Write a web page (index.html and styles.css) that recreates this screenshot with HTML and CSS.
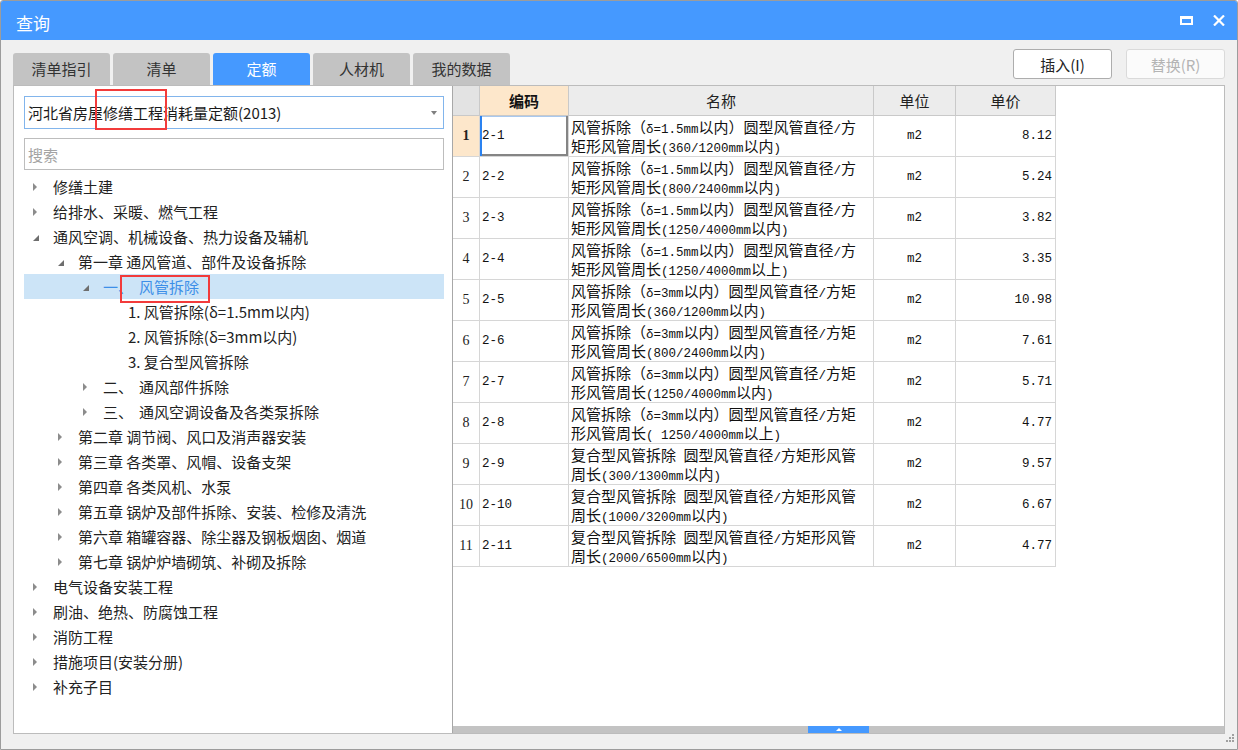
FILE: index.html
```html
<!DOCTYPE html>
<html lang="zh-CN">
<head>
<meta charset="utf-8">
<title>查询</title>
<link rel="stylesheet" href="styles.css">
</head>
<body>
<div class="window">
  <div class="titlebar">
    <span class="title">查询</span>
    <div class="win-btns">
      <svg class="ic" width="13" height="9" viewBox="0 0 13 9"><path d="M0 0h13v9H0z M2 3h9v4H2z" fill="#fff" fill-rule="evenodd"/></svg>
      <svg class="ic" width="12" height="11" viewBox="0 0 12 11"><path d="M1 0.5L11 10.5M11 0.5L1 10.5" stroke="#fff" stroke-width="2.2"/></svg>
    </div>
  </div>
  <div class="content">
    <div class="toolbar">
      <div class="tabs">
        <div class="tab">清单指引</div>
        <div class="tab">清单</div>
        <div class="tab active">定额</div>
        <div class="tab">人材机</div>
        <div class="tab">我的数据</div>
      </div>
      <div class="actions">
        <button class="btn">插入(I)</button>
        <button class="btn disabled">替换(R)</button>
      </div>
    </div>
    <div class="main">
      <div class="left">
        <div class="combo">
          <span class="combo-text">河北省房屋修缮工程消耗量定额(2013)</span>
          <span class="combo-arrow"></span>
          <span class="mark mark-combo"></span>
        </div>
        <div class="search">搜索</div>
        <ul class="tree">
          <li class="node l0"><i class="tw c"></i><span>修缮土建</span></li>
          <li class="node l0"><i class="tw c"></i><span>给排水、采暖、燃气工程</span></li>
          <li class="node l0"><i class="tw o"></i><span>通风空调、机械设备、热力设备及辅机</span></li>
          <li class="node l1"><i class="tw o"></i><span>第一章 通风管道、部件及设备拆除</span></li>
          <li class="node l2 sel"><i class="tw o"></i><span>一、</span><span class="sub">风管拆除</span><span class="mark mark-node"></span></li>
          <li class="node l3"><i class="tw"></i><span>1. 风管拆除(δ=1.5mm以内)</span></li>
          <li class="node l3"><i class="tw"></i><span>2. 风管拆除(δ=3mm以内)</span></li>
          <li class="node l3"><i class="tw"></i><span>3. 复合型风管拆除</span></li>
          <li class="node l2"><i class="tw c"></i><span>二、</span><span class="sub">通风部件拆除</span></li>
          <li class="node l2"><i class="tw c"></i><span>三、</span><span class="sub">通风空调设备及各类泵拆除</span></li>
          <li class="node l1"><i class="tw c"></i><span>第二章 调节阀、风口及消声器安装</span></li>
          <li class="node l1"><i class="tw c"></i><span>第三章 各类罩、风帽、设备支架</span></li>
          <li class="node l1"><i class="tw c"></i><span>第四章 各类风机、水泵</span></li>
          <li class="node l1"><i class="tw c"></i><span>第五章 锅炉及部件拆除、安装、检修及清洗</span></li>
          <li class="node l1"><i class="tw c"></i><span>第六章 箱罐容器、除尘器及钢板烟囱、烟道</span></li>
          <li class="node l1"><i class="tw c"></i><span>第七章 锅炉炉墙砌筑、补砌及拆除</span></li>
          <li class="node l0"><i class="tw c"></i><span>电气设备安装工程</span></li>
          <li class="node l0"><i class="tw c"></i><span>刷油、绝热、防腐蚀工程</span></li>
          <li class="node l0"><i class="tw c"></i><span>消防工程</span></li>
          <li class="node l0"><i class="tw c"></i><span>措施项目(安装分册)</span></li>
          <li class="node l0"><i class="tw c"></i><span>补充子目</span></li>
        </ul>
      </div>
      <div class="right">
        <div class="grid-area">
          <table class="grid">
            <colgroup><col class="c-rn"><col class="c-code"><col class="c-name"><col class="c-unit"><col class="c-price"></colgroup>
            <thead>
              <tr><th class="corner"></th><th class="sorted">编码</th><th>名称</th><th>单位</th><th>单价</th></tr>
            </thead>
            <tbody>
              <tr><td class="rn cur">1</td><td class="code focus">2-1</td><td class="name">风管拆除（<span class="m">δ=1.5mm</span>以内）圆型风管直径<span class="m">/</span>方<br>矩形风管周长<span class="m">(360/1200mm</span>以内<span class="m">)</span></td><td class="unit">m2</td><td class="price">8.12</td></tr>
              <tr><td class="rn">2</td><td class="code">2-2</td><td class="name">风管拆除（<span class="m">δ=1.5mm</span>以内）圆型风管直径<span class="m">/</span>方<br>矩形风管周长<span class="m">(800/2400mm</span>以内<span class="m">)</span></td><td class="unit">m2</td><td class="price">5.24</td></tr>
              <tr><td class="rn">3</td><td class="code">2-3</td><td class="name">风管拆除（<span class="m">δ=1.5mm</span>以内）圆型风管直径<span class="m">/</span>方<br>矩形风管周长<span class="m">(1250/4000mm</span>以内<span class="m">)</span></td><td class="unit">m2</td><td class="price">3.82</td></tr>
              <tr><td class="rn">4</td><td class="code">2-4</td><td class="name">风管拆除（<span class="m">δ=1.5mm</span>以内）圆型风管直径<span class="m">/</span>方<br>矩形风管周长<span class="m">(1250/4000mm</span>以上<span class="m">)</span></td><td class="unit">m2</td><td class="price">3.35</td></tr>
              <tr><td class="rn">5</td><td class="code">2-5</td><td class="name">风管拆除（<span class="m">δ=3mm</span>以内）圆型风管直径<span class="m">/</span>方矩<br>形风管周长<span class="m">(360/1200mm</span>以内<span class="m">)</span></td><td class="unit">m2</td><td class="price">10.98</td></tr>
              <tr><td class="rn">6</td><td class="code">2-6</td><td class="name">风管拆除（<span class="m">δ=3mm</span>以内）圆型风管直径<span class="m">/</span>方矩<br>形风管周长<span class="m">(800/2400mm</span>以内<span class="m">)</span></td><td class="unit">m2</td><td class="price">7.61</td></tr>
              <tr><td class="rn">7</td><td class="code">2-7</td><td class="name">风管拆除（<span class="m">δ=3mm</span>以内）圆型风管直径<span class="m">/</span>方矩<br>形风管周长<span class="m">(1250/4000mm</span>以内<span class="m">)</span></td><td class="unit">m2</td><td class="price">5.71</td></tr>
              <tr><td class="rn">8</td><td class="code">2-8</td><td class="name">风管拆除（<span class="m">δ=3mm</span>以内）圆型风管直径<span class="m">/</span>方矩<br>形风管周长<span class="m">( 1250/4000mm</span>以上<span class="m">)</span></td><td class="unit">m2</td><td class="price">4.77</td></tr>
              <tr><td class="rn">9</td><td class="code">2-9</td><td class="name">复合型风管拆除<span class="m"> </span>圆型风管直径<span class="m">/</span>方矩形风管<br>周长<span class="m">(300/1300mm</span>以内<span class="m">)</span></td><td class="unit">m2</td><td class="price">9.57</td></tr>
              <tr><td class="rn">10</td><td class="code">2-10</td><td class="name">复合型风管拆除<span class="m"> </span>圆型风管直径<span class="m">/</span>方矩形风管<br>周长<span class="m">(1000/3200mm</span>以内<span class="m">)</span></td><td class="unit">m2</td><td class="price">6.67</td></tr>
              <tr><td class="rn">11</td><td class="code">2-11</td><td class="name">复合型风管拆除<span class="m"> </span>圆型风管直径<span class="m">/</span>方矩形风管<br>周长<span class="m">(2000/6500mm</span>以内<span class="m">)</span></td><td class="unit">m2</td><td class="price">4.77</td></tr>
            </tbody>
          </table>
        </div>
        <div class="splitter"><span class="thumb"><span class="thumb-arrow"></span></span></div>
      </div>
    </div>
  </div>
  <svg class="grip" width="12" height="12" viewBox="0 0 12 12">
    <rect x="9" y="1" width="2" height="2" fill="#a0a0a0"/>
    <rect x="6" y="4" width="2" height="2" fill="#a0a0a0"/>
    <rect x="9" y="4" width="2" height="2" fill="#a0a0a0"/>
    <rect x="3" y="7" width="2" height="2" fill="#a0a0a0"/>
    <rect x="6" y="7" width="2" height="2" fill="#a0a0a0"/>
    <rect x="9" y="7" width="2" height="2" fill="#a0a0a0"/>
  </svg>
</div>
</body>
</html>
```

FILE: styles.css
```css
* { box-sizing: border-box; }
html, body { margin: 0; padding: 0; }
body {
  width: 1238px;
  height: 750px;
  overflow: hidden;
  background: #ffffff;
  font-family: "Noto Sans CJK SC", "Noto Sans", sans-serif;
}

.window {
  position: relative;
  width: 1238px;
  height: 750px;
  border: 1px solid #9c9c9c;
  border-radius: 3px 3px 0 0;
  background: #f0f0f0;
  display: flex;
  flex-direction: column;
}

/* title bar */
.titlebar {
  height: 39px;
  flex: none;
  background: #4599ff;
  display: flex;
  align-items: center;
  justify-content: space-between;
  padding: 0 12px 0 15px;
  color: #fff;
  border-radius: 2px 2px 0 0;
}
.title { font-size: 17px; line-height: 1; padding-top: 3px; }
.win-btns { display: flex; align-items: center; gap: 20px; }
.ic { display: block; }

/* content */
.content {
  flex: 1;
  display: flex;
  flex-direction: column;
  padding: 9px 12px 15px;
  min-height: 0;
}
.toolbar {
  height: 36px;
  flex: none;
  display: flex;
  justify-content: space-between;
}
.tabs { align-self: flex-end; display: flex; gap: 3px; }
.tab {
  width: 97px;
  height: 32px;
  background: #c3c3c3;
  border-radius: 3px 3px 0 0;
  text-align: center;
  line-height: 32px;
  font-size: 15px;
  color: #333;
}
.tab.active { background: #4599ff; color: #fff; }
.actions { display: flex; gap: 14px; align-self: flex-start; }
.btn {
  width: 99px;
  height: 30px;
  border: 1px solid #adadad;
  border-radius: 3px;
  background: #fff;
  font-family: inherit;
  font-size: 15px;
  color: #222;
  padding: 0;
}
.btn.disabled { border-color: #dadada; background: #fbfbfb; color: #b4b4b4; }

.main {
  flex: 1;
  display: flex;
  border: 1px solid #bcbcbc;
  background: #fff;
  min-height: 0;
}

/* left panel */
.left {
  width: 439px;
  flex: none;
  border-right: 1px solid #a8a8a8;
  padding: 10px 8px 0 10px;
  overflow: hidden;
}
.combo {
  position: relative;
  height: 33px;
  border: 1px solid #82b5ec;
  display: flex;
  align-items: center;
  padding-left: 3px;
  font-size: 15px;
  color: #1a1a1a;
}
.combo-text { flex: 1; white-space: nowrap; }
.combo-arrow {
  width: 0;
  height: 0;
  border-top: 4px solid #7f7f7f;
  border-left: 3.5px solid transparent;
  border-right: 3.5px solid transparent;
  margin-right: 6px;
}
.mark { position: absolute; border: 2px solid #f23b3b; pointer-events: none; }
.mark-combo { left: 70px; top: -8px; width: 72px; height: 41px; }

.search {
  height: 32px;
  margin-top: 9px;
  border: 1px solid #bdbdbd;
  display: flex;
  align-items: center;
  padding-left: 3px;
  font-size: 15px;
  color: #a3a3a3;
}

.tree { list-style: none; margin: 4px 0 0; padding: 0; }
.node {
  position: relative;
  height: 25px;
  display: flex;
  align-items: center;
  font-size: 15px;
  color: #222;
  white-space: nowrap;
}
.l0 { padding-left: 9px; }
.l1 { padding-left: 34px; }
.l2 { padding-left: 59px; }
.l3 { padding-left: 84px; }
.tw { width: 20px; height: 25px; flex: none; display: flex; align-items: center; }
.tw.c::before {
  content: "";
  border-left: 4px solid #8c8c8c;
  border-top: 4px solid transparent;
  border-bottom: 4px solid transparent;
}
.tw.o::before {
  content: "";
  border-bottom: 6px solid #6e6e6e;
  border-left: 6px solid transparent;
  margin-top: 3px;
}
.node.sel { background: #cce4f7; color: #3d8fe8; }
.sub { margin-left: 6px; }
.mark-node { left: 96px; top: 1px; width: 90px; height: 28px; }

/* right panel */
.right { flex: 1; display: flex; flex-direction: column; min-width: 0; }
.grid-area { flex: 1; background: #fff; overflow: hidden; }
.grid {
  border-collapse: separate;
  border-spacing: 0;
  table-layout: fixed;
  width: 603px;
  color: #111;
}
.c-rn { width: 27px; }
.c-code { width: 89px; }
.c-name { width: 305px; }
.c-unit { width: 82px; }
.c-price { width: 100px; }
.grid th, .grid td {
  border-right: 1px solid #d6d6d6;
  border-bottom: 1px solid #d6d6d6;
  padding: 0;
  vertical-align: middle;
}
.grid thead tr { height: 30px; }
.grid tbody tr { height: 41px; }
.grid th {
  background: #ececec;
  font-weight: normal;
  font-size: 15px;
  color: #222;
  border-color: #c9c9c9;
}
.grid th.corner { background: #e3e3e3; }
.grid th.sorted { background: #fde7cb; font-weight: bold; color: #111; }

.rn {
  text-align: center;
  font-family: "Liberation Serif", serif;
  font-size: 14px;
  color: #222;
}
.rn.cur { background: #fde7cb; font-weight: bold; }
.grid td.code {
  padding-left: 2px;
  font-family: "Liberation Mono", monospace;
  font-size: 12.5px;
}
.grid td.focus {
  box-shadow: inset 2px 0 #2a82f0, inset -2px 0 #858585, inset 0 -2px #858585, inset 0 1px #a9c9ef;
}
.grid td.name {
  padding-left: 2px;
  font-size: 15px;
  line-height: 19px;
  white-space: nowrap;
  overflow: hidden;
}
.m {
  font-family: "Liberation Mono", monospace;
  font-size: 12.5px;
  line-height: 1;
  white-space: pre;
}
.grid td.unit {
  text-align: center;
  font-family: "Liberation Mono", monospace;
  font-size: 12.5px;
}
.grid td.price {
  text-align: right;
  padding-right: 3px;
  font-family: "Liberation Mono", monospace;
  font-size: 12.5px;
}

.splitter {
  height: 7px;
  flex: none;
  background: #c3c3c3;
  display: flex;
  justify-content: center;
}
.thumb {
  width: 61px;
  height: 7px;
  background: #4599ff;
  display: flex;
  justify-content: center;
  align-items: center;
}
.thumb-arrow {
  width: 0;
  height: 0;
  border-bottom: 3px solid #fff;
  border-left: 3px solid transparent;
  border-right: 3px solid transparent;
}

.grip { position: absolute; right: 2px; bottom: 4px; }
```
